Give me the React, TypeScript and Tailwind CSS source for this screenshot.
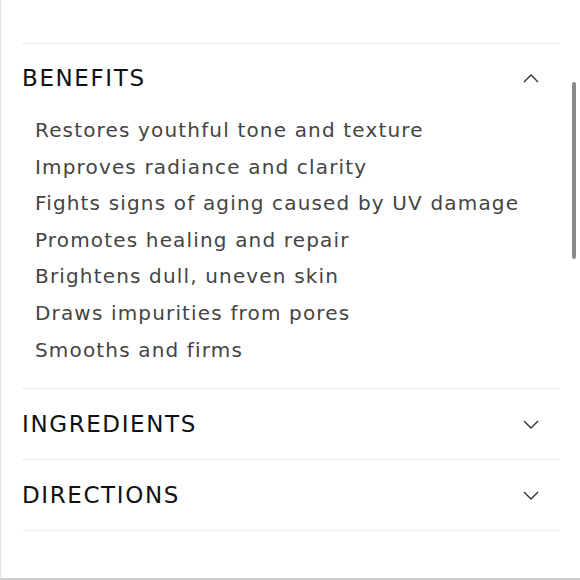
const benefits = [
  'Restores youthful tone and texture',
  'Improves radiance and clarity',
  'Fights signs of aging caused by UV damage',
  'Promotes healing and repair',
  'Brightens dull, uneven skin',
  'Draws impurities from pores',
  'Smooths and firms',
];

function Chevron({ up }: { up?: boolean }) {
  return (
    <svg width="16" height="9" viewBox="0 0 16 9" fill="none" stroke="#333" strokeWidth={1.4}>
      {up ? <path d="M1 8 L8 1 L15 8" /> : <path d="M1 1 L8 8 L15 1" />}
    </svg>
  );
}

function Row({ title, open, children }: { title: string; open?: boolean; children?: React.ReactNode }) {
  return (
    <div className="border-b border-[#ececec]">
      <div className={`flex items-center justify-between pr-[21px] ${open ? 'h-[68px]' : 'h-[70px]'}`}>
        <h2 className="text-[23px] tracking-[0.07em] text-[#111]">{title}</h2>
        <Chevron up={open} />
      </div>
      {children}
    </div>
  );
}

export default function App() {
  return (
    <div
      className="relative h-[580px] w-[580px] bg-white border-l border-[#e6e6e6] border-b-2 border-b-[#cfcfcf] overflow-hidden"
      style={{ fontFamily: '"DejaVu Sans", "Open Sans", sans-serif' }}
    >
      <div className="pl-[21px] pr-[20px] pt-[43px]">
        <div className="border-t border-[#ececec]">
          <Row title="BENEFITS" open>
            <ul className="pl-[13px] pb-[20px]">
              {benefits.map((b) => (
                <li key={b} className="text-[20px] leading-[36.6px] tracking-[0.058em] text-[#444]">
                  {b}
                </li>
              ))}
            </ul>
          </Row>
          <Row title="INGREDIENTS" />
          <Row title="DIRECTIONS" />
        </div>
      </div>
      {/* scrollbar thumb */}
      <div className="absolute right-[4px] top-[82px] h-[177px] w-[4px] rounded-full bg-[#8a8a8a]" />
    </div>
  );
}
